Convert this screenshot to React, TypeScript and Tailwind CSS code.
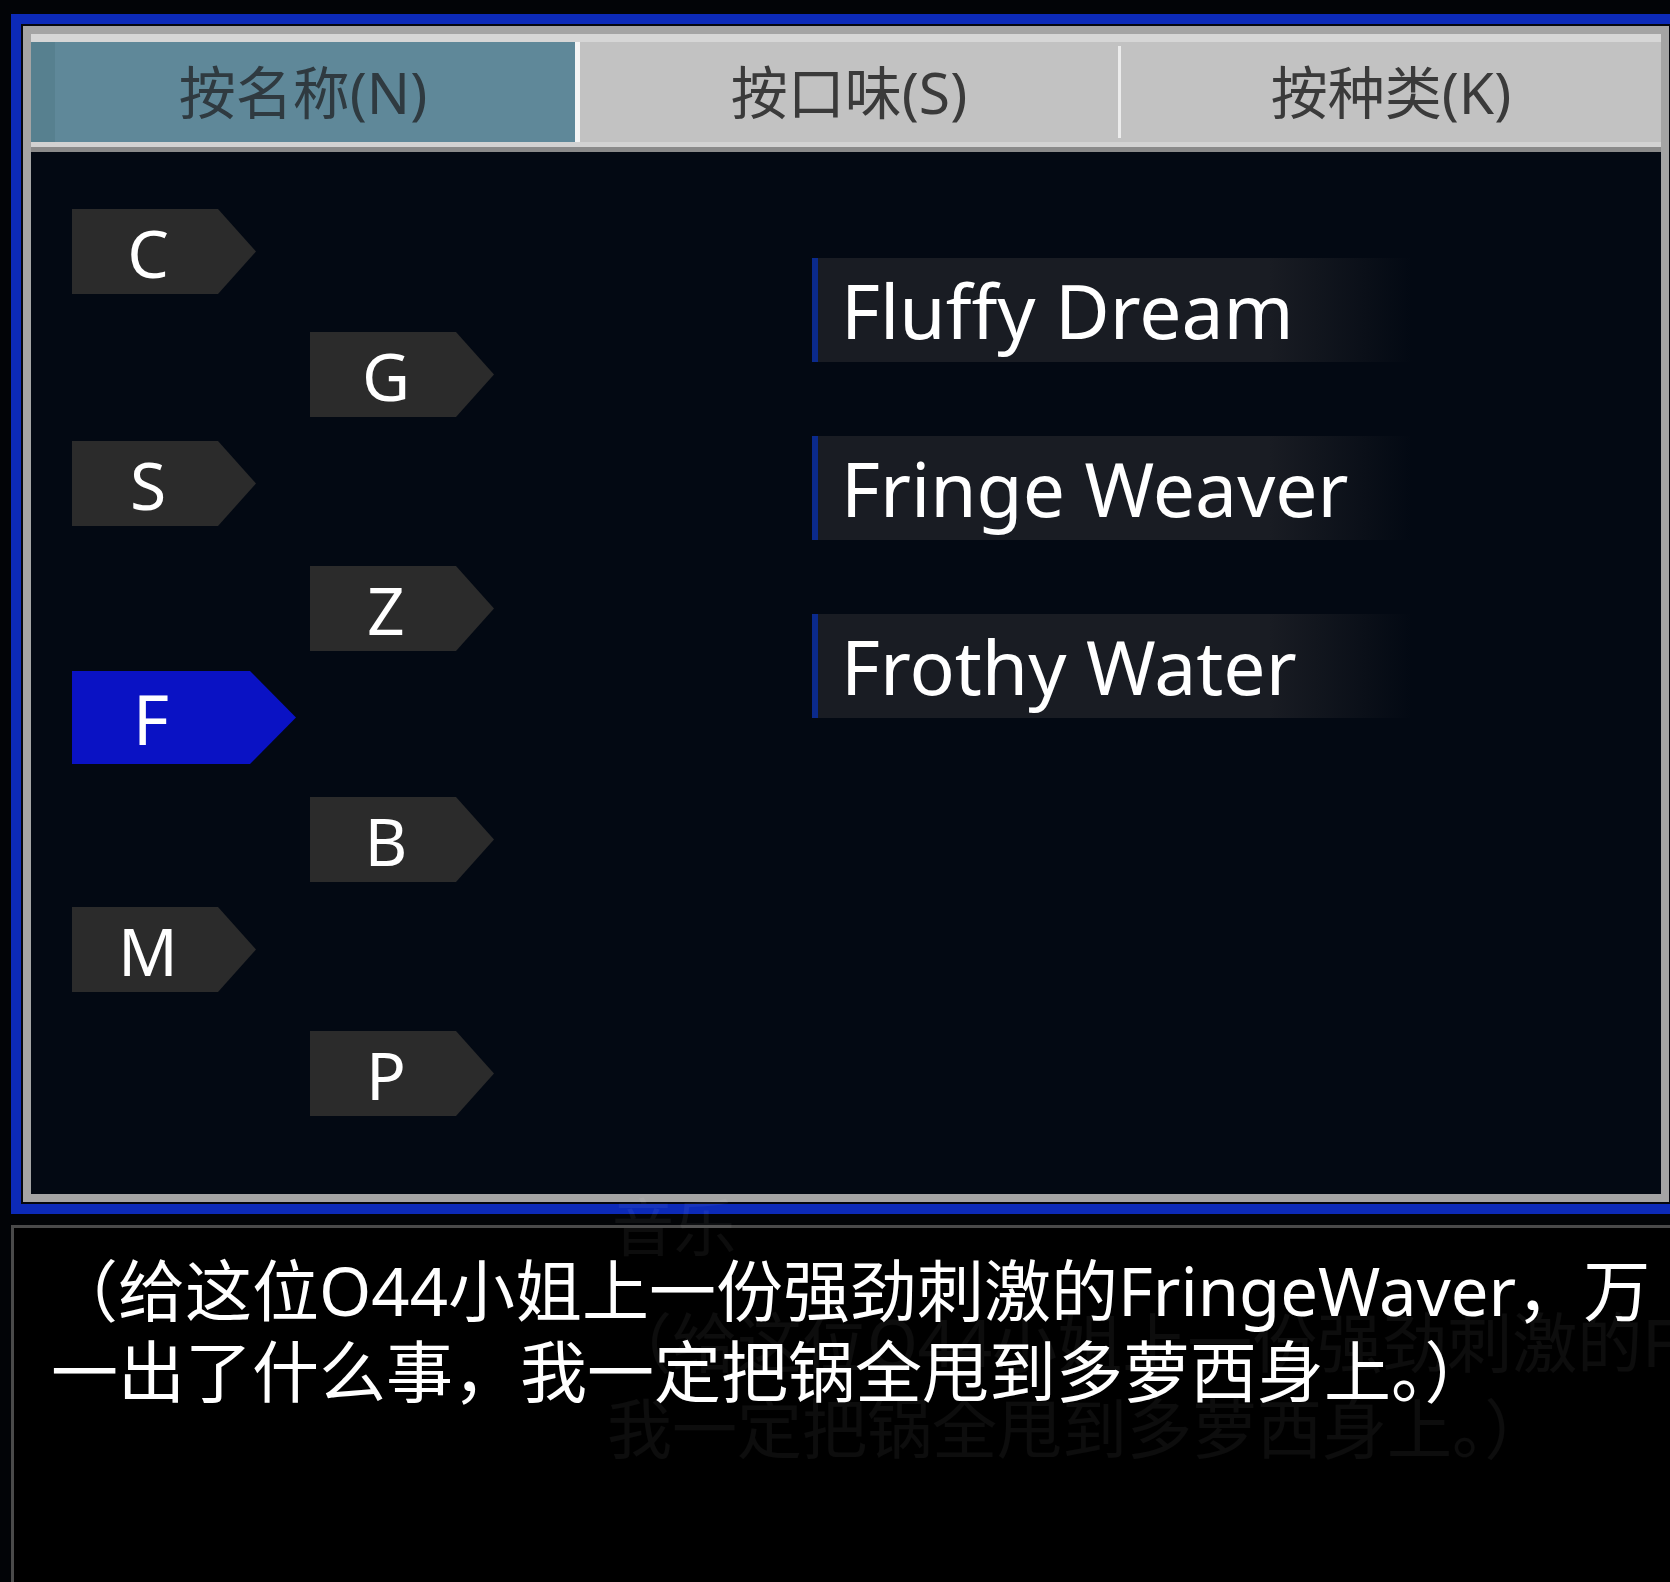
import React from "react";

const letters = [
  { ch: "C", right: false, mt: "mt-[57px]" },
  { ch: "G", right: true, mt: "mt-[38px]" },
  { ch: "S", right: false, mt: "mt-[24px]" },
  { ch: "Z", right: true, mt: "mt-[40px]" },
  { ch: "F", right: false, mt: "mt-[20px]", active: true },
  { ch: "B", right: true, mt: "mt-[33px]" },
  { ch: "M", right: false, mt: "mt-[25px]" },
  { ch: "P", right: true, mt: "mt-[39px]" },
];

const drinks = ["Fluffy Dream", "Fringe Weaver", "Frothy Water"];

const tabs = ["按名称(N)", "按口味(S)", "按种类(K)"];

function LetterTag({ ch, active }: { ch: string; active?: boolean }) {
  if (active) {
    return (
      <div className="flex h-[93px] w-[224px] items-center bg-[#0a12c4] [clip-path:polygon(0_0,178px_0,100%_50%,178px_100%,0_100%)]">
        <span className="w-[158px] text-center text-[70px] leading-none text-white">{ch}</span>
      </div>
    );
  }
  return (
    <div className="flex h-[85px] w-[184px] items-center bg-[#2b2b2b] [clip-path:polygon(0_0,146px_0,100%_50%,146px_100%,0_100%)]">
      <span className="w-[152px] text-center text-[66px] leading-none text-white">{ch}</span>
    </div>
  );
}

export default function App() {
  return (
    <div className="relative h-[1582px] w-[1670px] overflow-hidden bg-[#020407] font-['Noto_Sans','Noto_Sans_CJK_SC',sans-serif]">
      {/* drink menu panel */}
      <div className="pl-[11px] pt-[14px]">
        <div className="h-[1200px] w-[1670px] border-[10px] border-[#0c2ab8] bg-[#05070d] p-[2px]">
          <div className="flex h-full flex-col border-[8px] border-[#a4a4a4] bg-[#030913]">
            {/* sort tabs */}
            <div className="flex h-[118px] flex-col bg-[#c2c2c2]">
              <div className="h-[8px] bg-[#d6d6d6]" />
              <div className="flex h-[100px]">
                <div className="flex w-[544px] shrink-0 items-center justify-center border-l-[24px] border-[#57808f] bg-[#5f8899] pr-[24px] text-[57px] leading-none text-[#2f3a40]">
                  {tabs[0]}
                </div>
                <div className="w-[5px] shrink-0 bg-[#f4f4f4]" />
                <div className="flex w-[538px] shrink-0 items-center justify-center bg-[#c2c2c2] text-[57px] leading-none text-[#3a3a3a]">
                  {tabs[1]}
                </div>
                <div className="my-[4px] w-[3px] shrink-0 bg-[#ececec]" />
                <div className="flex flex-1 items-center justify-center bg-[#c2c2c2] text-[57px] leading-none text-[#3a3a3a]">
                  {tabs[2]}
                </div>
              </div>
              <div className="h-[5px] bg-[#d2d2d2]" />
              <div className="h-[5px] bg-[#8a8a8a]" />
            </div>

            {/* letters + drinks */}
            <div className="flex flex-1">
              <div className="flex w-[781px] flex-col pl-[41px]">
                {letters.map((l) => (
                  <div key={l.ch} className={`${l.mt} ${l.right ? "ml-[238px]" : ""}`}>
                    <LetterTag ch={l.ch} active={l.active} />
                  </div>
                ))}
              </div>
              <div className="flex flex-col gap-[74px] pt-[106px]">
                {drinks.map((d) => (
                  <div
                    key={d}
                    className="flex h-[104px] w-[600px] items-center border-l-[6px] border-[#0b2a8c] bg-[linear-gradient(to_right,#191c23_0%,#191c23_76%,rgba(25,28,35,0)_100%)] pl-[23px] text-[75px] leading-none text-white"
                  >
                    {d}
                  </div>
                ))}
              </div>
            </div>
          </div>
        </div>
      </div>

      {/* dialogue box */}
      <div className="ml-[11px] mt-[11px] h-[380px] w-[1680px] border-[3px] border-[#4a4a4a] bg-black pl-[37px] pt-[22px]">
        <p className="whitespace-nowrap text-[67px] leading-[81px] text-white">
          （给这位O44小姐上一份强劲刺激的FringeWaver，万
          <br />
          一出了什么事，我一定把锅全甩到多萝西身上。）
        </p>
      </div>

      {/* faint ghost of the previous line behind the box */}
      <div className="pointer-events-none absolute left-[612px] top-[1196px] whitespace-nowrap text-[62px] leading-none text-white/[0.05]">
        音乐
      </div>
      <div className="pointer-events-none absolute left-[607px] top-[1299px] whitespace-nowrap text-[65px] leading-[86px] text-white/[0.05]">
        （给这位O44小姐上一份强劲刺激的FringeWaver，
        <br />
        我一定把锅全甩到多萝西身上。）
      </div>
    </div>
  );
}
